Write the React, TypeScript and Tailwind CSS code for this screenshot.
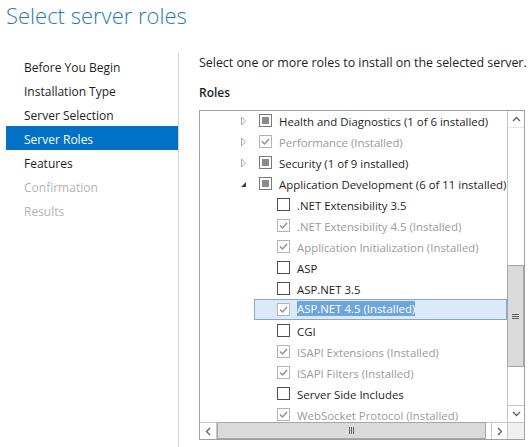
import React from "react";

type State = "unchecked" | "indeterminate" | "checkedDisabled";
type Row = {
  label: string;
  level: 0 | 1;
  exp?: "collapsed" | "expanded";
  state: State;
  gray?: boolean;
  selected?: boolean;
};

const rows: Row[] = [
  { label: "Health and Diagnostics (1 of 6 installed)", level: 0, exp: "collapsed", state: "indeterminate" },
  { label: "Performance (Installed)", level: 0, exp: "collapsed", state: "checkedDisabled", gray: true },
  { label: "Security (1 of 9 installed)", level: 0, exp: "collapsed", state: "indeterminate" },
  { label: "Application Development (6 of 11 installed)", level: 0, exp: "expanded", state: "indeterminate" },
  { label: ".NET Extensibility 3.5", level: 1, state: "unchecked" },
  { label: ".NET Extensibility 4.5 (Installed)", level: 1, state: "checkedDisabled", gray: true },
  { label: "Application Initialization (Installed)", level: 1, state: "checkedDisabled", gray: true },
  { label: "ASP", level: 1, state: "unchecked" },
  { label: "ASP.NET 3.5", level: 1, state: "unchecked" },
  { label: "ASP.NET 4.5 (Installed)", level: 1, state: "checkedDisabled", gray: true, selected: true },
  { label: "CGI", level: 1, state: "unchecked" },
  { label: "ISAPI Extensions (Installed)", level: 1, state: "checkedDisabled", gray: true },
  { label: "ISAPI Filters (Installed)", level: 1, state: "checkedDisabled", gray: true },
  { label: "Server Side Includes", level: 1, state: "unchecked" },
  { label: "WebSocket Protocol (Installed)", level: 1, state: "checkedDisabled", gray: true },
];

const nav = [
  { label: "Before You Begin", kind: "normal" },
  { label: "Installation Type", kind: "normal" },
  { label: "Server Selection", kind: "normal" },
  { label: "Server Roles", kind: "active" },
  { label: "Features", kind: "normal" },
  { label: "Confirmation", kind: "disabled" },
  { label: "Results", kind: "disabled" },
];

function Checkbox({ state }: { state: State }) {
  if (state === "unchecked") {
    return <div className="w-[13px] h-[13px] shrink-0 border border-[#4f4f4f] bg-white" />;
  }
  if (state === "indeterminate") {
    return (
      <div className="w-[13px] h-[13px] shrink-0 border border-[#7a7a7a] bg-white flex items-center justify-center">
        <div className="w-[7px] h-[7px] bg-[#8a8a8a]" />
      </div>
    );
  }
  return (
    <div className="w-[13px] h-[13px] shrink-0 border border-[#b4b4b4] bg-white flex items-center justify-center">
      <svg width="11" height="11" viewBox="0 0 11 11">
        <path d="M2 5.5 L4.5 8 L9 3" fill="none" stroke="#8e8e8e" strokeWidth="1.4" />
      </svg>
    </div>
  );
}

function Expander({ exp }: { exp?: "collapsed" | "expanded" }) {
  return (
    <div className="w-[19px] shrink-0 flex items-center">
      {exp === "collapsed" ? (
        <svg width="7" height="10" viewBox="0 0 7 10">
          <path d="M1.5 1 L5.5 5 L1.5 9 Z" fill="none" stroke="#a6a6a6" strokeWidth="1" />
        </svg>
      ) : (
        <svg width="7" height="10" viewBox="0 0 7 10">
          <path d="M1 8 L6 8 L6 3 Z" fill="#404040" />
        </svg>
      )}
    </div>
  );
}

function RowItem({ row }: { row: Row }) {
  const text = row.gray ? "text-[#9b9b9b]" : "text-[#1e1e1e]";
  if (row.level === 0) {
    return (
      <div className="h-[21px] flex items-center pl-[40px] whitespace-nowrap">
        <Expander exp={row.exp} />
        <Checkbox state={row.state} />
        <span className={`ml-[7px] pt-[2px] ${text}`}>{row.label}</span>
      </div>
    );
  }
  if (row.selected) {
    return (
      <div className="h-[21px] flex pl-[54px] whitespace-nowrap">
        <div className="flex-1 flex items-center border border-[#82a8d8] bg-[#dbe9f9] pl-[22px]">
          <Checkbox state={row.state} />
          <span className="ml-[7px] h-[15px] leading-[15px] -mt-[2px] bg-[#6ea6dc] text-white">{row.label}</span>
        </div>
      </div>
    );
  }
  return (
    <div className="h-[21px] flex items-center pl-[77px] whitespace-nowrap">
      <Checkbox state={row.state} />
      <span className={`ml-[7px] pt-[2px] ${text}`}>{row.label}</span>
    </div>
  );
}

function ChevronUp() {
  return (
    <svg width="9" height="6" viewBox="0 0 9 6">
      <path d="M1 5 L4.5 1.5 L8 5" fill="none" stroke="#606060" strokeWidth="1.3" />
    </svg>
  );
}
function ChevronDown() {
  return (
    <svg width="9" height="6" viewBox="0 0 9 6">
      <path d="M1 1 L4.5 4.5 L8 1" fill="none" stroke="#606060" strokeWidth="1.3" />
    </svg>
  );
}
function ChevronLeft() {
  return (
    <svg width="6" height="9" viewBox="0 0 6 9">
      <path d="M5 1 L1.5 4.5 L5 8" fill="none" stroke="#606060" strokeWidth="1.3" />
    </svg>
  );
}
function ChevronRight() {
  return (
    <svg width="6" height="9" viewBox="0 0 6 9">
      <path d="M1 1 L4.5 4.5 L1 8" fill="none" stroke="#606060" strokeWidth="1.3" />
    </svg>
  );
}

export default function App() {
  return (
    <div className="w-[532px] h-[447px] bg-white overflow-hidden flex flex-col font-['Open_Sans','Noto_Sans',sans-serif] text-[11px] leading-[16px] text-[#1e1e1e]">
      <div className="h-[53px] pl-[6px] pt-[1px] text-[22px] leading-[28px] font-light text-[#2a7ab5]">
        Select server roles
      </div>
      <div className="flex-1 flex min-h-0">
        <div className="w-[179px] shrink-0 border-r border-[#d4d4d4] pt-[1px]">
          {nav.map((n) => (
            <div
              key={n.label}
              className={`ml-[6px] h-[24px] pt-[6px] pl-[18px] text-[12px] leading-[16px] ${
                n.kind === "active"
                  ? "bg-[#0072c6] text-white"
                  : n.kind === "disabled"
                  ? "text-[#b4b4b4]"
                  : "text-[#1e1e1e]"
              }`}
            >
              {n.label}
            </div>
          ))}
        </div>
        <div className="flex-1 pl-[20px] pt-[2px] flex flex-col">
          <div className="h-[16px] text-[12.4px] whitespace-nowrap">Select one or more roles to install on the selected server.</div>
          <div className="h-[16px] mt-[14px] text-[12px] font-semibold">Roles</div>
          <div className="mt-[9px] w-[326px] h-[330px] border border-[#a0a0a0] flex flex-col text-[11.4px]">
            <div className="flex-1 flex min-h-0">
              <div className="flex-1 overflow-hidden">
                <div className="-mt-px">
                  {rows.map((r) => (
                    <RowItem key={r.label} row={r} />
                  ))}
                </div>
              </div>
              <div className="w-[17px] shrink-0 border-l border-[#c6c6c6] flex flex-col bg-white">
                <div className="h-[17px] flex items-center justify-center border-b border-[#e6e6e6]">
                  <ChevronUp />
                </div>
                <div className="h-[137px]" />
                <div className="h-[102px] -ml-px bg-[#dadada] border border-[#a6a6a6] flex items-center justify-center">
                  <div className="flex flex-col gap-[1px]">
                    <div className="w-[7px] h-px bg-[#606060]" />
                    <div className="w-[7px] h-px bg-[#606060]" />
                    <div className="w-[7px] h-px bg-[#606060]" />
                  </div>
                </div>
                <div className="flex-1" />
                <div className="h-[17px] flex items-center justify-center border-t border-[#c6c6c6]">
                  <ChevronDown />
                </div>
              </div>
            </div>
            <div className="h-[17px] shrink-0 border-t border-[#c6c6c6] flex">
              <div className="w-[17px] flex items-center justify-center border-r border-[#c6c6c6]">
                <ChevronLeft />
              </div>
              <div className="w-[269px] -mt-px bg-[#dadada] border border-[#a6a6a6] flex items-center justify-center">
                <div className="flex gap-[1px]">
                  <div className="w-px h-[7px] bg-[#606060]" />
                  <div className="w-px h-[7px] bg-[#606060]" />
                  <div className="w-px h-[7px] bg-[#606060]" />
                </div>
              </div>
              <div className="flex-1" />
              <div className="w-[17px] flex items-center justify-center border-l border-r border-[#c6c6c6]">
                <ChevronRight />
              </div>
              <div className="w-[16px] bg-[#f0f0f0]" />
            </div>
          </div>
        </div>
      </div>
    </div>
  );
}
